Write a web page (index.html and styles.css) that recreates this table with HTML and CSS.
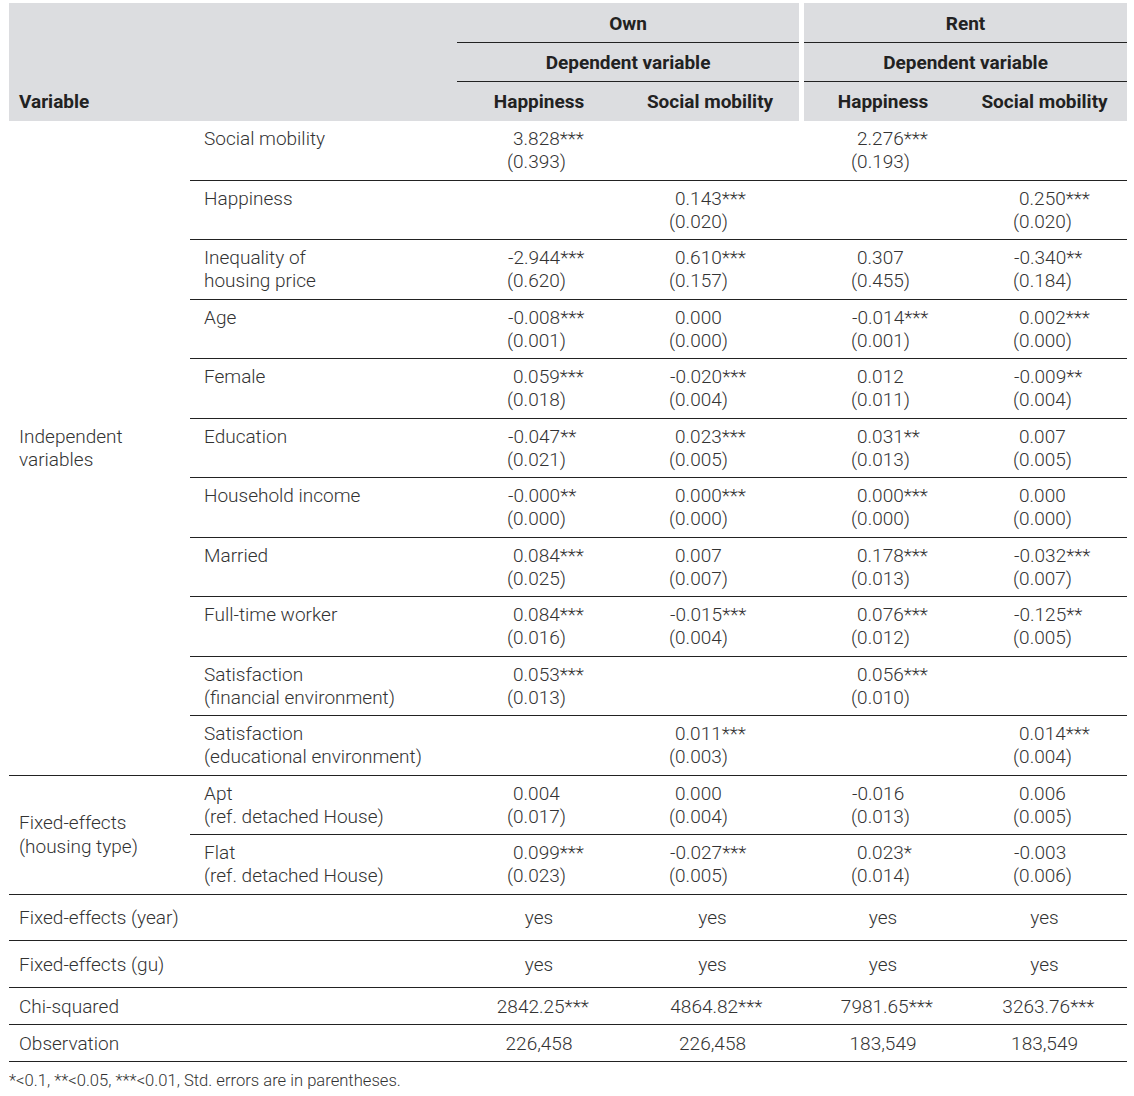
FILE: index.html
```html
<!DOCTYPE html>
<html lang="en">
<head>
<meta charset="utf-8">
<title>Regression results</title>
<link rel="stylesheet" href="styles.css">
</head>
<body>
<table class="tbl">
  <colgroup>
    <col class="w1"><col class="w2"><col class="w3"><col class="w4"><col class="w5"><col class="w6">
  </colgroup>
  <thead>
    <tr class="top">
      <th class="hv" colspan="2" rowspan="3">Variable</th>
      <th class="hg hl" colspan="2">Own</th>
      <th class="hl" colspan="2">Rent</th>
    </tr>
    <tr>
      <th class="hg hl" colspan="2">Dependent variable</th>
      <th class="hl" colspan="2">Dependent variable</th>
    </tr>
    <tr>
      <th>Happiness</th>
      <th class="hg">Social mobility</th>
      <th>Happiness</th>
      <th>Social mobility</th>
    </tr>
  </thead>
  <tbody>
    <tr>
      <td class="grp" rowspan="11">Independent<br>variables</td>
      <td class="lab">Social mobility</td>
      <td class="d d1"><div class="p">3.828***</div><div>(0.393)</div></td>
      <td class="d d2"></td>
      <td class="d d3"><div class="p">2.276***</div><div>(0.193)</div></td>
      <td class="d d4"></td>
    </tr>
    <tr>
      <td class="lab">Happiness</td>
      <td class="d d1"></td>
      <td class="d d2"><div class="p">0.143***</div><div>(0.020)</div></td>
      <td class="d d3"></td>
      <td class="d d4"><div class="p">0.250***</div><div>(0.020)</div></td>
    </tr>
    <tr>
      <td class="lab">Inequality of<br>housing price</td>
      <td class="d d1"><div class="n">-2.944***</div><div>(0.620)</div></td>
      <td class="d d2"><div class="p">0.610***</div><div>(0.157)</div></td>
      <td class="d d3"><div class="p">0.307</div><div>(0.455)</div></td>
      <td class="d d4"><div class="n">-0.340**</div><div>(0.184)</div></td>
    </tr>
    <tr>
      <td class="lab">Age</td>
      <td class="d d1"><div class="n">-0.008***</div><div>(0.001)</div></td>
      <td class="d d2"><div class="p">0.000</div><div>(0.000)</div></td>
      <td class="d d3"><div class="n">-0.014***</div><div>(0.001)</div></td>
      <td class="d d4"><div class="p">0.002***</div><div>(0.000)</div></td>
    </tr>
    <tr>
      <td class="lab">Female</td>
      <td class="d d1"><div class="p">0.059***</div><div>(0.018)</div></td>
      <td class="d d2"><div class="n">-0.020***</div><div>(0.004)</div></td>
      <td class="d d3"><div class="p">0.012</div><div>(0.011)</div></td>
      <td class="d d4"><div class="n">-0.009**</div><div>(0.004)</div></td>
    </tr>
    <tr>
      <td class="lab">Education</td>
      <td class="d d1"><div class="n">-0.047**</div><div>(0.021)</div></td>
      <td class="d d2"><div class="p">0.023***</div><div>(0.005)</div></td>
      <td class="d d3"><div class="p">0.031**</div><div>(0.013)</div></td>
      <td class="d d4"><div class="p">0.007</div><div>(0.005)</div></td>
    </tr>
    <tr>
      <td class="lab">Household income</td>
      <td class="d d1"><div class="n">-0.000**</div><div>(0.000)</div></td>
      <td class="d d2"><div class="p">0.000***</div><div>(0.000)</div></td>
      <td class="d d3"><div class="p">0.000***</div><div>(0.000)</div></td>
      <td class="d d4"><div class="p">0.000</div><div>(0.000)</div></td>
    </tr>
    <tr>
      <td class="lab">Married</td>
      <td class="d d1"><div class="p">0.084***</div><div>(0.025)</div></td>
      <td class="d d2"><div class="p">0.007</div><div>(0.007)</div></td>
      <td class="d d3"><div class="p">0.178***</div><div>(0.013)</div></td>
      <td class="d d4"><div class="n">-0.032***</div><div>(0.007)</div></td>
    </tr>
    <tr>
      <td class="lab">Full-time worker</td>
      <td class="d d1"><div class="p">0.084***</div><div>(0.016)</div></td>
      <td class="d d2"><div class="n">-0.015***</div><div>(0.004)</div></td>
      <td class="d d3"><div class="p">0.076***</div><div>(0.012)</div></td>
      <td class="d d4"><div class="n">-0.125**</div><div>(0.005)</div></td>
    </tr>
    <tr>
      <td class="lab">Satisfaction<br>(financial environment)</td>
      <td class="d d1"><div class="p">0.053***</div><div>(0.013)</div></td>
      <td class="d d2"></td>
      <td class="d d3"><div class="p">0.056***</div><div>(0.010)</div></td>
      <td class="d d4"></td>
    </tr>
    <tr class="end">
      <td class="lab">Satisfaction<br>(educational environment)</td>
      <td class="d d1"></td>
      <td class="d d2"><div class="p">0.011***</div><div>(0.003)</div></td>
      <td class="d d3"></td>
      <td class="d d4"><div class="p">0.014***</div><div>(0.004)</div></td>
    </tr>
    <tr>
      <td class="grp" rowspan="2">Fixed-effects<br>(housing type)</td>
      <td class="lab">Apt<br>(ref. detached House)</td>
      <td class="d d1"><div class="p">0.004</div><div>(0.017)</div></td>
      <td class="d d2"><div class="p">0.000</div><div>(0.004)</div></td>
      <td class="d d3"><div class="n">-0.016</div><div>(0.013)</div></td>
      <td class="d d4"><div class="p">0.006</div><div>(0.005)</div></td>
    </tr>
    <tr>
      <td class="lab">Flat<br>(ref. detached House)</td>
      <td class="d d1"><div class="p">0.099***</div><div>(0.023)</div></td>
      <td class="d d2"><div class="n">-0.027***</div><div>(0.005)</div></td>
      <td class="d d3"><div class="p">0.023*</div><div>(0.014)</div></td>
      <td class="d d4"><div class="n">-0.003</div><div>(0.006)</div></td>
    </tr>
    <tr class="tall">
      <td class="one" colspan="2">Fixed-effects (year)</td>
      <td class="ctr">yes</td><td class="ctr">yes</td><td class="ctr">yes</td><td class="ctr">yes</td>
    </tr>
    <tr class="tall">
      <td class="one" colspan="2">Fixed-effects (gu)</td>
      <td class="ctr">yes</td><td class="ctr">yes</td><td class="ctr">yes</td><td class="ctr">yes</td>
    </tr>
    <tr class="short">
      <td class="one" colspan="2">Chi-squared</td>
      <td class="ctr">2842.25<span class="st">***</span></td>
      <td class="ctr">4864.82<span class="st">***</span></td>
      <td class="ctr">7981.65<span class="st">***</span></td>
      <td class="ctr">3263.76<span class="st">***</span></td>
    </tr>
    <tr class="short">
      <td class="one" colspan="2">Observation</td>
      <td class="ctr">226,458</td><td class="ctr">226,458</td><td class="ctr">183,549</td><td class="ctr">183,549</td>
    </tr>
  </tbody>
</table>
<p class="note">*&lt;0.1, **&lt;0.05, ***&lt;0.01, Std. errors are in parentheses.</p>
</body>
</html>
```

FILE: styles.css
```css
body {
  margin: 3px 0 0 9px;
  background: #fff;
  font-family: Roboto, "Liberation Sans", sans-serif;
  color: #333;
}

.tbl {
  border-collapse: collapse;
  table-layout: fixed;
  width: 1118px;
  font-size: 19px;
  font-weight: 300;
  line-height: 23.2px;
}

.w1 { width: 181px; }
.w2 { width: 267px; }
.w3 { width: 164px; }
.w4 { width: 183px; }
.w5 { width: 158px; }
.w6 { width: 165px; }

thead th {
  background: #dcdde0;
  color: #222;
  font-weight: 700;
  font-size: 19px;
  line-height: 23px;
  height: 39px;
  padding: 0;
  text-align: center;
  vertical-align: middle;
  border: 0;
}

thead tr.top th.hl {
  padding-top: 1px;
}

thead th.hl {
  background:
    linear-gradient(#222, #222) left bottom / 100% 1px no-repeat,
    #dcdde0;
}

thead th.hg {
  background:
    linear-gradient(to left, #fff 5px, transparent 5px),
    #dcdde0;
  padding-right: 5px;
}

thead th.hg.hl {
  background:
    linear-gradient(#222, #222) left bottom / calc(100% - 5px) 1px no-repeat,
    linear-gradient(to left, #fff 5px, transparent 5px),
    #dcdde0;
}

thead th.hv {
  text-align: left;
  vertical-align: bottom;
  padding: 0 0 8px 10px;
}

tbody td {
  padding: 6.05px 0;
  border-bottom: 1px solid #222;
  vertical-align: top;
}

tbody td.grp {
  vertical-align: middle;
  padding-left: 10px;
}

tbody td.lab {
  padding-left: 14px;
}

.d1 { padding-left: 50px !important; }
.d2 { padding-left: 48px !important; }
.d3 { padding-left: 47px !important; }
.d4 { padding-left: 51px !important; }

.d .p { padding-left: 6px; }
.d .n { padding-left: 1px; }

tbody td.one {
  padding-left: 10px;
}

tbody td.ctr {
  text-align: center;
}

tr.tall td {
  padding-top: 11.4px;
  padding-bottom: 11.4px;
  vertical-align: middle;
}

tr.short td {
  padding-top: 6.4px;
  padding-bottom: 6.4px;
  vertical-align: middle;
}

.st {
  margin-right: -0.4em;
}

.note {
  margin: 9px 0 0;
  font-size: 16.6px;
  font-weight: 300;
  color: #333;
}
```
